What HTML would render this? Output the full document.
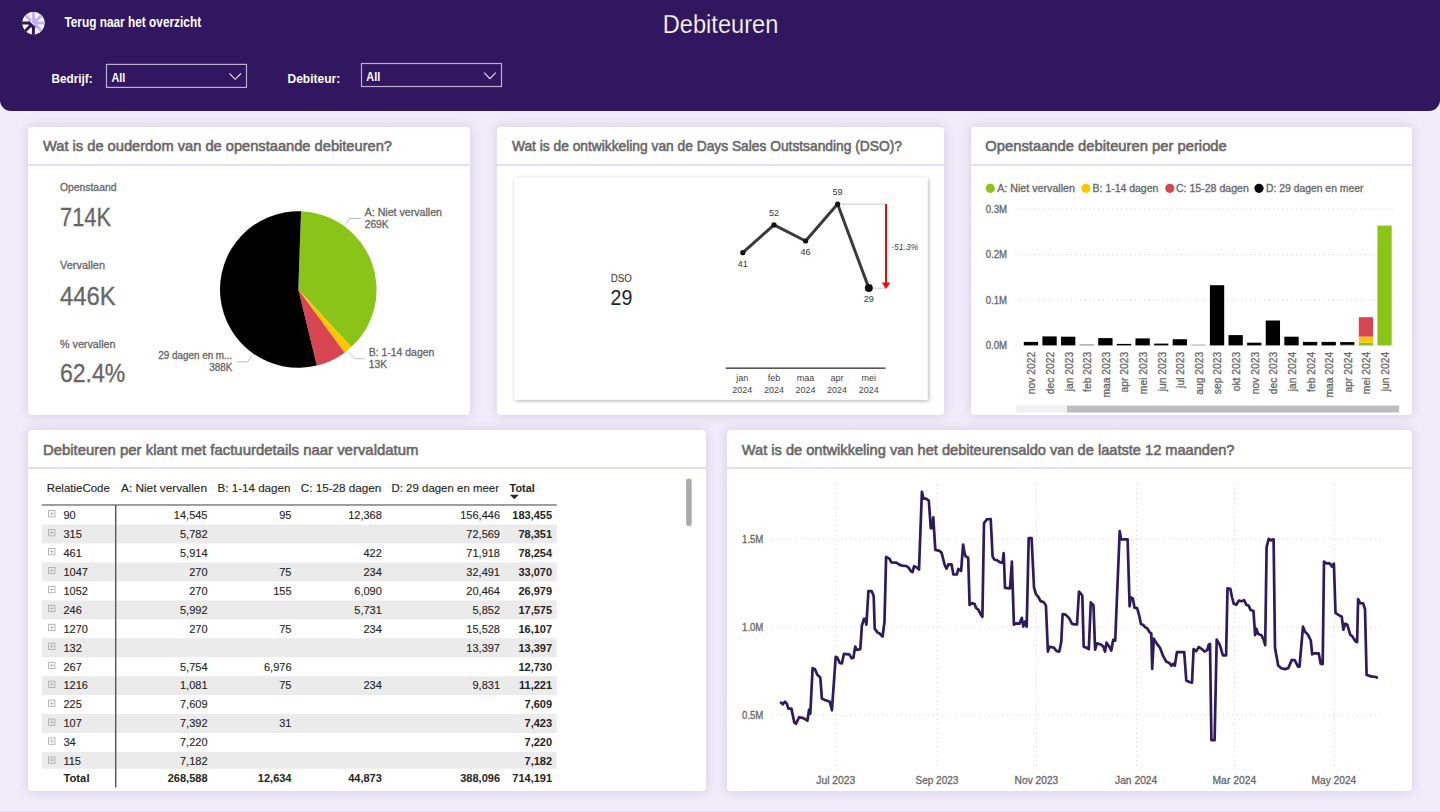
<!DOCTYPE html>
<html><head><meta charset="utf-8">
<style>
*{margin:0;padding:0;box-sizing:border-box}
html,body{width:1440px;height:812px;overflow:hidden;background:#F0ECF9;font-family:"Liberation Sans",sans-serif}
#hdr{position:absolute;left:0;top:0;width:1440px;height:111px;background:#311660;border-radius:0 0 11px 11px}
.p{position:absolute;background:#fff;border-radius:4px;box-shadow:0 0 11px rgba(60,40,120,0.17)}
svg{position:absolute;left:0;top:0}
</style></head><body>
<div id="hdr"></div>
<div style="position:absolute;left:0;top:811px;width:1440px;height:1px;background:#E2E0E7"></div>
<div class="p" style="left:28px;top:126.5px;width:441.5px;height:288px"></div>
<div class="p" style="left:496.6px;top:126.5px;width:447.4px;height:288px"></div>
<div class="p" style="left:970.7px;top:126.5px;width:441.6px;height:288px"></div>
<div class="p" style="left:28px;top:430px;width:678px;height:360.5px"></div>
<div class="p" style="left:726.6px;top:430px;width:685.7px;height:360.5px"></div>
<svg width="1440" height="812" viewBox="0 0 1440 812" font-family="Liberation Sans">
<!-- header -->
<clipPath id="icl"><circle cx="33.45" cy="23.1" r="11.4"/></clipPath>
<g clip-path="url(#icl)">
<circle cx="33.45" cy="23.1" r="11.4" fill="#fff"/>
<g stroke="#C3ADF7" stroke-width="3" stroke-linecap="butt">
<line x1="33.6" y1="11.7" x2="33.6" y2="23.1"/>
<line x1="41.6" y1="15.1" x2="33.6" y2="23.1"/>
<line x1="44.9" y1="23" x2="33.6" y2="23"/>
<line x1="41.6" y1="31.1" x2="34.6" y2="24.1"/>
<line x1="25.4" y1="15.1" x2="31" y2="20.7"/>
<line x1="35.6" y1="20" x2="35.6" y2="27"/>
</g>
<g stroke="#311660" stroke-width="3" stroke-linecap="butt">
<line x1="22" y1="23" x2="29.3" y2="23"/>
<line x1="28.2" y1="22" x2="34.6" y2="28.4"/>
<line x1="33.4" y1="35" x2="33.4" y2="27"/>
<line x1="25.2" y1="31" x2="31.2" y2="25"/>
</g>
</g>

<text x="662.8" y="33.3" font-size="26" fill="#fff" stroke="#311660" stroke-width="0.25" textLength="115.5" lengthAdjust="spacingAndGlyphs">Debiteuren</text>
<text x="64.4" y="26.75" font-size="13" font-weight="bold" fill="#fff" textLength="136.7" lengthAdjust="spacingAndGlyphs" transform="translate(64.4 26.75) scale(1 1.12) translate(-64.4 -26.75)">Terug naar het overzicht</text>
<text x="51.5" y="83.3" font-size="13.5" font-weight="bold" fill="#fff" textLength="41.2" lengthAdjust="spacingAndGlyphs">Bedrijf:</text>
<rect x="106.5" y="64.4" width="140" height="23" fill="none" stroke="#BBB0D0" stroke-width="1.2"/>
<text x="111.5" y="82.2" font-size="13" font-weight="bold" fill="#fff" textLength="13.8" lengthAdjust="spacingAndGlyphs">All</text>
<polyline points="229.5,73.5 235.2,79.3 241,73.5" fill="none" stroke="#E6E0F0" stroke-width="1.1"/>
<text x="287.5" y="83" font-size="13.5" font-weight="bold" fill="#fff" textLength="52.8" lengthAdjust="spacingAndGlyphs">Debiteur:</text>
<rect x="361.5" y="63.5" width="140" height="23" fill="none" stroke="#BBB0D0" stroke-width="1.2"/>
<text x="366.3" y="81" font-size="13" font-weight="bold" fill="#fff" textLength="14" lengthAdjust="spacingAndGlyphs">All</text>
<polyline points="484,72.7 489.9,78.6 495.8,72.7" fill="none" stroke="#E6E0F0" stroke-width="1.1"/>
<!-- panel titles -->
<g font-size="14.5" fill="#666" stroke="#666" stroke-width="0.55">
<text x="43" y="151.4" textLength="349" lengthAdjust="spacingAndGlyphs">Wat is de ouderdom van de openstaande debiteuren?</text>
<text x="511.9" y="151.4" textLength="390" lengthAdjust="spacingAndGlyphs">Wat is de ontwikkeling van de Days Sales Outstsanding (DSO)?</text>
<text x="985.3" y="151.4" textLength="241.5" lengthAdjust="spacingAndGlyphs">Openstaande debiteuren per periode</text>
<text x="42.9" y="454.8" textLength="375.5" lengthAdjust="spacingAndGlyphs">Debiteuren per klant met factuurdetails naar vervaldatum</text>
<text x="741.8" y="454.6" textLength="492.6" lengthAdjust="spacingAndGlyphs">Wat is de ontwikkeling van het debiteurensaldo van de laatste 12 maanden?</text>
</g>
<g fill="#DDD4FA">
<rect x="28" y="164.2" width="441.5" height="1.6"/>
<rect x="496.6" y="164.2" width="447.4" height="1.6"/>
<rect x="970.7" y="164.2" width="441.6" height="1.6"/>
<rect x="28" y="467.2" width="678" height="1.6"/>
<rect x="726.6" y="467.2" width="685.7" height="1.6"/>
</g>

<text x="60.00" y="190.70" font-size="11" fill="#666" stroke="#666" stroke-width="0.3" textLength="56.40" lengthAdjust="spacingAndGlyphs">Openstaand</text>
<text x="60.00" y="225.70" font-size="25" fill="#666" stroke="#666" stroke-width="0.3" textLength="51.00" lengthAdjust="spacingAndGlyphs">714K</text>
<text x="60.00" y="269.30" font-size="11" fill="#666" stroke="#666" stroke-width="0.3" textLength="45.00" lengthAdjust="spacingAndGlyphs">Vervallen</text>
<text x="60.00" y="304.50" font-size="25" fill="#666" stroke="#666" stroke-width="0.3" textLength="55.60" lengthAdjust="spacingAndGlyphs">446K</text>
<text x="60.00" y="347.60" font-size="11" fill="#666" stroke="#666" stroke-width="0.3" textLength="55.50" lengthAdjust="spacingAndGlyphs">% vervallen</text>
<text x="60.00" y="382.30" font-size="25" fill="#666" stroke="#666" stroke-width="0.3" textLength="65.30" lengthAdjust="spacingAndGlyphs">62.4%</text>
<path d="M298.3,289.5 L301.03,211.25 A78.3,78.3 0 0 1 351.31,347.12 Z" fill="#8BC419"/>
<path d="M298.3,289.5 L351.31,347.12 A78.3,78.3 0 0 1 344.59,352.65 Z" fill="#FFC600"/>
<path d="M298.3,289.5 L344.59,352.65 A78.3,78.3 0 0 1 316.75,365.60 Z" fill="#D64550"/>
<path d="M298.3,289.5 L316.75,365.60 A78.3,78.3 0 1 1 301.03,211.25 Z" fill="#000000"/>
<polyline points="345.3,224.8 349.9,218.5 360.7,218.5" fill="none" stroke="#BBBBBB" stroke-width="1"/>
<polyline points="349,352.5 355.2,358.75 364.6,358.75" fill="none" stroke="#BBBBBB" stroke-width="1"/>
<polyline points="236.5,361.9 247.5,361.9 251.5,356.3" fill="none" stroke="#BBBBBB" stroke-width="1"/>
<text x="364.70" y="215.80" font-size="10" fill="#666" stroke="#666" stroke-width="0.3" textLength="77.30" lengthAdjust="spacingAndGlyphs">A: Niet vervallen</text>
<text x="364.70" y="227.50" font-size="10" fill="#666" stroke="#666" stroke-width="0.3" textLength="24.00" lengthAdjust="spacingAndGlyphs">269K</text>
<text x="368.75" y="356.25" font-size="10" fill="#666" stroke="#666" stroke-width="0.3" textLength="65.60" lengthAdjust="spacingAndGlyphs">B: 1-14 dagen</text>
<text x="368.75" y="367.70" font-size="10" fill="#666" stroke="#666" stroke-width="0.3" textLength="18.30" lengthAdjust="spacingAndGlyphs">13K</text>
<text x="158.30" y="359.40" font-size="10" fill="#666" stroke="#666" stroke-width="0.3" textLength="74.00" lengthAdjust="spacingAndGlyphs">29 dagen en m...</text>
<text x="209.30" y="371.00" font-size="10" fill="#666" stroke="#666" stroke-width="0.3" textLength="23.00" lengthAdjust="spacingAndGlyphs">388K</text>
<filter id="cardsh" x="-5%" y="-5%" width="110%" height="110%"><feGaussianBlur in="SourceAlpha" stdDeviation="2.2"/><feOffset dx="0.6" dy="1"/><feComponentTransfer><feFuncA type="linear" slope="0.32"/></feComponentTransfer><feMerge><feMergeNode/><feMergeNode in="SourceGraphic"/></feMerge></filter>
<rect x="514.3" y="177.8" width="413.2" height="222" fill="#fff" filter="url(#cardsh)"/>
<text x="610.70" y="281.80" font-size="10.5" fill="#333" textLength="21.30" lengthAdjust="spacingAndGlyphs">DSO</text>
<text x="610.50" y="304.70" font-size="21.5" fill="#252423" textLength="21.80" lengthAdjust="spacingAndGlyphs">29</text>
<line x1="837.6" y1="204.1" x2="886.3" y2="204.1" stroke="#C8C8C8" stroke-width="1"/>
<line x1="868.8" y1="288.1" x2="886.3" y2="288.1" stroke="#C8C8C8" stroke-width="1"/>
<polyline points="742.8,252.7 774,224.9 805.6,241 837.6,204.1 868.8,288.1" fill="none" stroke="#3A3A3A" stroke-width="3" stroke-linejoin="round"/>
<circle cx="742.8" cy="252.7" r="2.6" fill="#111"/>
<circle cx="774" cy="224.9" r="2.6" fill="#111"/>
<circle cx="805.6" cy="241" r="2.6" fill="#111"/>
<circle cx="837.6" cy="204.1" r="2.6" fill="#111"/>
<circle cx="868.8" cy="288.1" r="4" fill="#111"/>
<line x1="886" y1="204" x2="886" y2="283" stroke="#FF0000" stroke-width="2"/>
<path d="M881.8,282.5 L890.2,282.5 L886,289 Z" fill="#FF0000"/>
<text x="891.30" y="249.80" font-size="9" fill="#444" font-style="italic" textLength="26.90" lengthAdjust="spacingAndGlyphs">-51.3%</text>
<text x="742.80" y="266.50" font-size="9" fill="#333" text-anchor="middle">41</text>
<text x="774.00" y="216.00" font-size="9" fill="#333" text-anchor="middle">52</text>
<text x="805.60" y="254.80" font-size="9" fill="#333" text-anchor="middle">46</text>
<text x="837.60" y="195.30" font-size="9" fill="#333" text-anchor="middle">59</text>
<text x="868.80" y="301.90" font-size="9" fill="#333" text-anchor="middle">29</text>
<rect x="725.8" y="367.4" width="159.7" height="1.6" fill="#555"/>
<text x="742.30" y="380.70" font-size="9" fill="#444" text-anchor="middle">jan</text>
<text x="742.30" y="392.60" font-size="9" fill="#444" text-anchor="middle">2024</text>
<text x="774.00" y="380.70" font-size="9" fill="#444" text-anchor="middle">feb</text>
<text x="774.00" y="392.60" font-size="9" fill="#444" text-anchor="middle">2024</text>
<text x="805.60" y="380.70" font-size="9" fill="#444" text-anchor="middle">maa</text>
<text x="805.60" y="392.60" font-size="9" fill="#444" text-anchor="middle">2024</text>
<text x="837.00" y="380.70" font-size="9" fill="#444" text-anchor="middle">apr</text>
<text x="837.00" y="392.60" font-size="9" fill="#444" text-anchor="middle">2024</text>
<text x="868.80" y="380.70" font-size="9" fill="#444" text-anchor="middle">mei</text>
<text x="868.80" y="392.60" font-size="9" fill="#444" text-anchor="middle">2024</text>
<circle cx="990.3" cy="188.3" r="4.6" fill="#8BC419"/>
<text x="997.20" y="191.50" font-size="10.2" fill="#666" stroke="#666" stroke-width="0.3" textLength="77.80" lengthAdjust="spacingAndGlyphs">A: Niet vervallen</text>
<circle cx="1085.8" cy="188.3" r="4.6" fill="#FFC600"/>
<text x="1092.60" y="191.50" font-size="10.2" fill="#666" stroke="#666" stroke-width="0.3" textLength="65.70" lengthAdjust="spacingAndGlyphs">B: 1-14 dagen</text>
<circle cx="1169.8" cy="188.3" r="4.6" fill="#D64550"/>
<text x="1175.90" y="191.50" font-size="10.2" fill="#666" stroke="#666" stroke-width="0.3" textLength="72.90" lengthAdjust="spacingAndGlyphs">C: 15-28 dagen</text>
<circle cx="1259" cy="188.3" r="4.6" fill="#000000"/>
<text x="1266.00" y="191.50" font-size="10.2" fill="#666" stroke="#666" stroke-width="0.3" textLength="97.40" lengthAdjust="spacingAndGlyphs">D: 29 dagen en meer</text>
<line x1="1015.5" y1="209.1" x2="1396" y2="209.1" stroke="#D0D0D0" stroke-width="1" stroke-dasharray="1 3.6"/>
<text x="985.70" y="212.90" font-size="10.2" fill="#666" stroke="#666" stroke-width="0.3" textLength="21.30" lengthAdjust="spacingAndGlyphs">0.3M</text>
<line x1="1015.5" y1="254.6" x2="1396" y2="254.6" stroke="#D0D0D0" stroke-width="1" stroke-dasharray="1 3.6"/>
<text x="985.70" y="258.40" font-size="10.2" fill="#666" stroke="#666" stroke-width="0.3" textLength="21.30" lengthAdjust="spacingAndGlyphs">0.2M</text>
<line x1="1015.5" y1="300.1" x2="1396" y2="300.1" stroke="#D0D0D0" stroke-width="1" stroke-dasharray="1 3.6"/>
<text x="985.70" y="303.90" font-size="10.2" fill="#666" stroke="#666" stroke-width="0.3" textLength="21.30" lengthAdjust="spacingAndGlyphs">0.1M</text>
<line x1="1015.5" y1="345.4" x2="1396" y2="345.4" stroke="#D0D0D0" stroke-width="1" stroke-dasharray="1 3.6"/>
<text x="985.70" y="349.20" font-size="10.2" fill="#666" stroke="#666" stroke-width="0.3" textLength="21.30" lengthAdjust="spacingAndGlyphs">0.0M</text>
<rect x="1023.80" y="341.90" width="14.3" height="3.5" fill="#000000"/>
<text transform="translate(1035.35,351.8) rotate(-90)" text-anchor="end" font-size="10.3" fill="#666" stroke="#666" stroke-width="0.28">nov 2022</text>
<rect x="1042.41" y="336.40" width="14.3" height="9" fill="#000000"/>
<text transform="translate(1053.96,351.8) rotate(-90)" text-anchor="end" font-size="10.3" fill="#666" stroke="#666" stroke-width="0.28">dec 2022</text>
<rect x="1061.02" y="336.70" width="14.3" height="8.7" fill="#000000"/>
<text transform="translate(1072.57,351.8) rotate(-90)" text-anchor="end" font-size="10.3" fill="#666" stroke="#666" stroke-width="0.28">jan 2023</text>
<rect x="1079.63" y="344.40" width="14.3" height="1" fill="#888"/>
<text transform="translate(1091.18,351.8) rotate(-90)" text-anchor="end" font-size="10.3" fill="#666" stroke="#666" stroke-width="0.28">feb 2023</text>
<rect x="1098.24" y="338.10" width="14.3" height="7.3" fill="#000000"/>
<text transform="translate(1109.79,351.8) rotate(-90)" text-anchor="end" font-size="10.3" fill="#666" stroke="#666" stroke-width="0.28">maa 2023</text>
<rect x="1116.85" y="343.90" width="14.3" height="1.5" fill="#000000"/>
<text transform="translate(1128.40,351.8) rotate(-90)" text-anchor="end" font-size="10.3" fill="#666" stroke="#666" stroke-width="0.28">apr 2023</text>
<rect x="1135.46" y="338.40" width="14.3" height="7" fill="#000000"/>
<text transform="translate(1147.01,351.8) rotate(-90)" text-anchor="end" font-size="10.3" fill="#666" stroke="#666" stroke-width="0.28">mei 2023</text>
<rect x="1154.07" y="343.60" width="14.3" height="1.8" fill="#000000"/>
<text transform="translate(1165.62,351.8) rotate(-90)" text-anchor="end" font-size="10.3" fill="#666" stroke="#666" stroke-width="0.28">jun 2023</text>
<rect x="1172.68" y="339.20" width="14.3" height="6.2" fill="#000000"/>
<text transform="translate(1184.23,351.8) rotate(-90)" text-anchor="end" font-size="10.3" fill="#666" stroke="#666" stroke-width="0.28">jul 2023</text>
<rect x="1191.29" y="344.60" width="14.3" height="0.8" fill="#999"/>
<text transform="translate(1202.84,351.8) rotate(-90)" text-anchor="end" font-size="10.3" fill="#666" stroke="#666" stroke-width="0.28">aug 2023</text>
<rect x="1209.90" y="285.20" width="14.3" height="60.2" fill="#000000"/>
<text transform="translate(1221.45,351.8) rotate(-90)" text-anchor="end" font-size="10.3" fill="#666" stroke="#666" stroke-width="0.28">sep 2023</text>
<rect x="1228.51" y="335.10" width="14.3" height="10.3" fill="#000000"/>
<text transform="translate(1240.06,351.8) rotate(-90)" text-anchor="end" font-size="10.3" fill="#666" stroke="#666" stroke-width="0.28">okt 2023</text>
<rect x="1247.12" y="342.70" width="14.3" height="2.7" fill="#000000"/>
<text transform="translate(1258.67,351.8) rotate(-90)" text-anchor="end" font-size="10.3" fill="#666" stroke="#666" stroke-width="0.28">nov 2023</text>
<rect x="1265.73" y="320.50" width="14.3" height="24.9" fill="#000000"/>
<text transform="translate(1277.28,351.8) rotate(-90)" text-anchor="end" font-size="10.3" fill="#666" stroke="#666" stroke-width="0.28">dec 2023</text>
<rect x="1284.34" y="336.70" width="14.3" height="8.7" fill="#000000"/>
<text transform="translate(1295.89,351.8) rotate(-90)" text-anchor="end" font-size="10.3" fill="#666" stroke="#666" stroke-width="0.28">jan 2024</text>
<rect x="1302.95" y="341.90" width="14.3" height="3.5" fill="#000000"/>
<text transform="translate(1314.50,351.8) rotate(-90)" text-anchor="end" font-size="10.3" fill="#666" stroke="#666" stroke-width="0.28">feb 2024</text>
<rect x="1321.56" y="341.90" width="14.3" height="3.5" fill="#000000"/>
<text transform="translate(1333.11,351.8) rotate(-90)" text-anchor="end" font-size="10.3" fill="#666" stroke="#666" stroke-width="0.28">maa 2024</text>
<rect x="1340.17" y="344.80" width="14.3" height="0.6" fill="#D64550"/>
<rect x="1340.17" y="342.10" width="14.3" height="2.7" fill="#000000"/>
<text transform="translate(1351.72,351.8) rotate(-90)" text-anchor="end" font-size="10.3" fill="#666" stroke="#666" stroke-width="0.28">apr 2024</text>
<rect x="1358.78" y="342.60" width="14.3" height="2.8" fill="#8BC419"/>
<rect x="1358.78" y="336.60" width="14.3" height="6" fill="#FFC600"/>
<rect x="1358.78" y="317.20" width="14.3" height="19.4" fill="#D64550"/>
<text transform="translate(1370.33,351.8) rotate(-90)" text-anchor="end" font-size="10.3" fill="#666" stroke="#666" stroke-width="0.28">mei 2024</text>
<rect x="1377.39" y="225.60" width="14.3" height="119.8" fill="#8BC419"/>
<text transform="translate(1388.94,351.8) rotate(-90)" text-anchor="end" font-size="10.3" fill="#666" stroke="#666" stroke-width="0.28">jun 2024</text>
<rect x="1016.2" y="405.5" width="50.9" height="7" fill="#F0F0F0"/>
<rect x="1067.1" y="405.5" width="332.1" height="7" fill="#BDBDBD"/>
<text x="46.70" y="491.60" font-size="11.3" fill="#252423" stroke="#252423" stroke-width="0.12" textLength="63.10" lengthAdjust="spacingAndGlyphs">RelatieCode</text>
<text x="121.00" y="491.60" font-size="11.3" fill="#252423" stroke="#252423" stroke-width="0.12" textLength="86.00" lengthAdjust="spacingAndGlyphs">A: Niet vervallen</text>
<text x="217.50" y="491.60" font-size="11.3" fill="#252423" stroke="#252423" stroke-width="0.12" textLength="72.90" lengthAdjust="spacingAndGlyphs">B: 1-14 dagen</text>
<text x="300.70" y="491.60" font-size="11.3" fill="#252423" stroke="#252423" stroke-width="0.12" textLength="80.70" lengthAdjust="spacingAndGlyphs">C: 15-28 dagen</text>
<text x="391.50" y="491.60" font-size="11.3" fill="#252423" stroke="#252423" stroke-width="0.12" textLength="107.50" lengthAdjust="spacingAndGlyphs">D: 29 dagen en meer</text>
<text x="509.60" y="491.60" font-size="11.3" fill="#252423" font-weight="bold" textLength="25.20" lengthAdjust="spacingAndGlyphs">Total</text>
<path d="M509.9,494.7 L518.8,494.7 L514.35,499.2 Z" fill="#252423"/>
<rect x="42" y="524.55" width="514.8" height="18.95" fill="#EBEBEB"/>
<rect x="42" y="562.45" width="514.8" height="18.95" fill="#EBEBEB"/>
<rect x="42" y="600.35" width="514.8" height="18.95" fill="#EBEBEB"/>
<rect x="42" y="638.25" width="514.8" height="18.95" fill="#EBEBEB"/>
<rect x="42" y="676.15" width="514.8" height="18.95" fill="#EBEBEB"/>
<rect x="42" y="714.05" width="514.8" height="18.95" fill="#EBEBEB"/>
<rect x="42" y="751.95" width="514.8" height="16.80" fill="#EBEBEB"/>
<rect x="48.6" y="510.60" width="6.3" height="6.3" fill="none" stroke="#ADADAD" stroke-width="0.9"/>
<path d="M49.9,513.75 H53.6 M51.75,511.90 V515.60" stroke="#ADADAD" stroke-width="0.8"/>
<text x="63.40" y="518.90" font-size="11" fill="#252423" stroke="#252423" stroke-width="0.12">90</text>
<text x="207.50" y="518.90" font-size="11" fill="#252423" stroke="#252423" stroke-width="0.12" text-anchor="end">14,545</text>
<text x="291.50" y="518.90" font-size="11" fill="#252423" stroke="#252423" stroke-width="0.12" text-anchor="end">95</text>
<text x="381.80" y="518.90" font-size="11" fill="#252423" stroke="#252423" stroke-width="0.12" text-anchor="end">12,368</text>
<text x="500.00" y="518.90" font-size="11" fill="#252423" stroke="#252423" stroke-width="0.12" text-anchor="end">156,446</text>
<text x="552.10" y="518.90" font-size="11" fill="#252423" font-weight="bold" text-anchor="end">183,455</text>
<rect x="48.6" y="529.55" width="6.3" height="6.3" fill="none" stroke="#ADADAD" stroke-width="0.9"/>
<path d="M49.9,532.70 H53.6 M51.75,530.85 V534.55" stroke="#ADADAD" stroke-width="0.8"/>
<text x="63.40" y="537.85" font-size="11" fill="#252423" stroke="#252423" stroke-width="0.12">315</text>
<text x="207.50" y="537.85" font-size="11" fill="#252423" stroke="#252423" stroke-width="0.12" text-anchor="end">5,782</text>
<text x="500.00" y="537.85" font-size="11" fill="#252423" stroke="#252423" stroke-width="0.12" text-anchor="end">72,569</text>
<text x="552.10" y="537.85" font-size="11" fill="#252423" font-weight="bold" text-anchor="end">78,351</text>
<rect x="48.6" y="548.50" width="6.3" height="6.3" fill="none" stroke="#ADADAD" stroke-width="0.9"/>
<path d="M49.9,551.65 H53.6 M51.75,549.80 V553.50" stroke="#ADADAD" stroke-width="0.8"/>
<text x="63.40" y="556.80" font-size="11" fill="#252423" stroke="#252423" stroke-width="0.12">461</text>
<text x="207.50" y="556.80" font-size="11" fill="#252423" stroke="#252423" stroke-width="0.12" text-anchor="end">5,914</text>
<text x="381.80" y="556.80" font-size="11" fill="#252423" stroke="#252423" stroke-width="0.12" text-anchor="end">422</text>
<text x="500.00" y="556.80" font-size="11" fill="#252423" stroke="#252423" stroke-width="0.12" text-anchor="end">71,918</text>
<text x="552.10" y="556.80" font-size="11" fill="#252423" font-weight="bold" text-anchor="end">78,254</text>
<rect x="48.6" y="567.45" width="6.3" height="6.3" fill="none" stroke="#ADADAD" stroke-width="0.9"/>
<path d="M49.9,570.60 H53.6 M51.75,568.75 V572.45" stroke="#ADADAD" stroke-width="0.8"/>
<text x="63.40" y="575.75" font-size="11" fill="#252423" stroke="#252423" stroke-width="0.12">1047</text>
<text x="207.50" y="575.75" font-size="11" fill="#252423" stroke="#252423" stroke-width="0.12" text-anchor="end">270</text>
<text x="291.50" y="575.75" font-size="11" fill="#252423" stroke="#252423" stroke-width="0.12" text-anchor="end">75</text>
<text x="381.80" y="575.75" font-size="11" fill="#252423" stroke="#252423" stroke-width="0.12" text-anchor="end">234</text>
<text x="500.00" y="575.75" font-size="11" fill="#252423" stroke="#252423" stroke-width="0.12" text-anchor="end">32,491</text>
<text x="552.10" y="575.75" font-size="11" fill="#252423" font-weight="bold" text-anchor="end">33,070</text>
<rect x="48.6" y="586.40" width="6.3" height="6.3" fill="none" stroke="#ADADAD" stroke-width="0.9"/>
<path d="M49.9,589.55 H53.6 M51.75,587.70 V591.40" stroke="#ADADAD" stroke-width="0.8"/>
<text x="63.40" y="594.70" font-size="11" fill="#252423" stroke="#252423" stroke-width="0.12">1052</text>
<text x="207.50" y="594.70" font-size="11" fill="#252423" stroke="#252423" stroke-width="0.12" text-anchor="end">270</text>
<text x="291.50" y="594.70" font-size="11" fill="#252423" stroke="#252423" stroke-width="0.12" text-anchor="end">155</text>
<text x="381.80" y="594.70" font-size="11" fill="#252423" stroke="#252423" stroke-width="0.12" text-anchor="end">6,090</text>
<text x="500.00" y="594.70" font-size="11" fill="#252423" stroke="#252423" stroke-width="0.12" text-anchor="end">20,464</text>
<text x="552.10" y="594.70" font-size="11" fill="#252423" font-weight="bold" text-anchor="end">26,979</text>
<rect x="48.6" y="605.35" width="6.3" height="6.3" fill="none" stroke="#ADADAD" stroke-width="0.9"/>
<path d="M49.9,608.50 H53.6 M51.75,606.65 V610.35" stroke="#ADADAD" stroke-width="0.8"/>
<text x="63.40" y="613.65" font-size="11" fill="#252423" stroke="#252423" stroke-width="0.12">246</text>
<text x="207.50" y="613.65" font-size="11" fill="#252423" stroke="#252423" stroke-width="0.12" text-anchor="end">5,992</text>
<text x="381.80" y="613.65" font-size="11" fill="#252423" stroke="#252423" stroke-width="0.12" text-anchor="end">5,731</text>
<text x="500.00" y="613.65" font-size="11" fill="#252423" stroke="#252423" stroke-width="0.12" text-anchor="end">5,852</text>
<text x="552.10" y="613.65" font-size="11" fill="#252423" font-weight="bold" text-anchor="end">17,575</text>
<rect x="48.6" y="624.30" width="6.3" height="6.3" fill="none" stroke="#ADADAD" stroke-width="0.9"/>
<path d="M49.9,627.45 H53.6 M51.75,625.60 V629.30" stroke="#ADADAD" stroke-width="0.8"/>
<text x="63.40" y="632.60" font-size="11" fill="#252423" stroke="#252423" stroke-width="0.12">1270</text>
<text x="207.50" y="632.60" font-size="11" fill="#252423" stroke="#252423" stroke-width="0.12" text-anchor="end">270</text>
<text x="291.50" y="632.60" font-size="11" fill="#252423" stroke="#252423" stroke-width="0.12" text-anchor="end">75</text>
<text x="381.80" y="632.60" font-size="11" fill="#252423" stroke="#252423" stroke-width="0.12" text-anchor="end">234</text>
<text x="500.00" y="632.60" font-size="11" fill="#252423" stroke="#252423" stroke-width="0.12" text-anchor="end">15,528</text>
<text x="552.10" y="632.60" font-size="11" fill="#252423" font-weight="bold" text-anchor="end">16,107</text>
<rect x="48.6" y="643.25" width="6.3" height="6.3" fill="none" stroke="#ADADAD" stroke-width="0.9"/>
<path d="M49.9,646.40 H53.6 M51.75,644.55 V648.25" stroke="#ADADAD" stroke-width="0.8"/>
<text x="63.40" y="651.55" font-size="11" fill="#252423" stroke="#252423" stroke-width="0.12">132</text>
<text x="500.00" y="651.55" font-size="11" fill="#252423" stroke="#252423" stroke-width="0.12" text-anchor="end">13,397</text>
<text x="552.10" y="651.55" font-size="11" fill="#252423" font-weight="bold" text-anchor="end">13,397</text>
<rect x="48.6" y="662.20" width="6.3" height="6.3" fill="none" stroke="#ADADAD" stroke-width="0.9"/>
<path d="M49.9,665.35 H53.6 M51.75,663.50 V667.20" stroke="#ADADAD" stroke-width="0.8"/>
<text x="63.40" y="670.50" font-size="11" fill="#252423" stroke="#252423" stroke-width="0.12">267</text>
<text x="207.50" y="670.50" font-size="11" fill="#252423" stroke="#252423" stroke-width="0.12" text-anchor="end">5,754</text>
<text x="291.50" y="670.50" font-size="11" fill="#252423" stroke="#252423" stroke-width="0.12" text-anchor="end">6,976</text>
<text x="552.10" y="670.50" font-size="11" fill="#252423" font-weight="bold" text-anchor="end">12,730</text>
<rect x="48.6" y="681.15" width="6.3" height="6.3" fill="none" stroke="#ADADAD" stroke-width="0.9"/>
<path d="M49.9,684.30 H53.6 M51.75,682.45 V686.15" stroke="#ADADAD" stroke-width="0.8"/>
<text x="63.40" y="689.45" font-size="11" fill="#252423" stroke="#252423" stroke-width="0.12">1216</text>
<text x="207.50" y="689.45" font-size="11" fill="#252423" stroke="#252423" stroke-width="0.12" text-anchor="end">1,081</text>
<text x="291.50" y="689.45" font-size="11" fill="#252423" stroke="#252423" stroke-width="0.12" text-anchor="end">75</text>
<text x="381.80" y="689.45" font-size="11" fill="#252423" stroke="#252423" stroke-width="0.12" text-anchor="end">234</text>
<text x="500.00" y="689.45" font-size="11" fill="#252423" stroke="#252423" stroke-width="0.12" text-anchor="end">9,831</text>
<text x="552.10" y="689.45" font-size="11" fill="#252423" font-weight="bold" text-anchor="end">11,221</text>
<rect x="48.6" y="700.10" width="6.3" height="6.3" fill="none" stroke="#ADADAD" stroke-width="0.9"/>
<path d="M49.9,703.25 H53.6 M51.75,701.40 V705.10" stroke="#ADADAD" stroke-width="0.8"/>
<text x="63.40" y="708.40" font-size="11" fill="#252423" stroke="#252423" stroke-width="0.12">225</text>
<text x="207.50" y="708.40" font-size="11" fill="#252423" stroke="#252423" stroke-width="0.12" text-anchor="end">7,609</text>
<text x="552.10" y="708.40" font-size="11" fill="#252423" font-weight="bold" text-anchor="end">7,609</text>
<rect x="48.6" y="719.05" width="6.3" height="6.3" fill="none" stroke="#ADADAD" stroke-width="0.9"/>
<path d="M49.9,722.20 H53.6 M51.75,720.35 V724.05" stroke="#ADADAD" stroke-width="0.8"/>
<text x="63.40" y="727.35" font-size="11" fill="#252423" stroke="#252423" stroke-width="0.12">107</text>
<text x="207.50" y="727.35" font-size="11" fill="#252423" stroke="#252423" stroke-width="0.12" text-anchor="end">7,392</text>
<text x="291.50" y="727.35" font-size="11" fill="#252423" stroke="#252423" stroke-width="0.12" text-anchor="end">31</text>
<text x="552.10" y="727.35" font-size="11" fill="#252423" font-weight="bold" text-anchor="end">7,423</text>
<rect x="48.6" y="738.00" width="6.3" height="6.3" fill="none" stroke="#ADADAD" stroke-width="0.9"/>
<path d="M49.9,741.15 H53.6 M51.75,739.30 V743.00" stroke="#ADADAD" stroke-width="0.8"/>
<text x="63.40" y="746.30" font-size="11" fill="#252423" stroke="#252423" stroke-width="0.12">34</text>
<text x="207.50" y="746.30" font-size="11" fill="#252423" stroke="#252423" stroke-width="0.12" text-anchor="end">7,220</text>
<text x="552.10" y="746.30" font-size="11" fill="#252423" font-weight="bold" text-anchor="end">7,220</text>
<rect x="48.6" y="756.95" width="6.3" height="6.3" fill="none" stroke="#ADADAD" stroke-width="0.9"/>
<path d="M49.9,760.10 H53.6 M51.75,758.25 V761.95" stroke="#ADADAD" stroke-width="0.8"/>
<text x="63.40" y="765.25" font-size="11" fill="#252423" stroke="#252423" stroke-width="0.12">115</text>
<text x="207.50" y="765.25" font-size="11" fill="#252423" stroke="#252423" stroke-width="0.12" text-anchor="end">7,182</text>
<text x="552.10" y="765.25" font-size="11" fill="#252423" font-weight="bold" text-anchor="end">7,182</text>
<text x="63.40" y="782.30" font-size="11.3" fill="#252423" font-weight="bold">Total</text>
<text x="207.50" y="782.30" font-size="11" fill="#252423" font-weight="bold" text-anchor="end">268,588</text>
<text x="291.50" y="782.30" font-size="11" fill="#252423" font-weight="bold" text-anchor="end">12,634</text>
<text x="381.80" y="782.30" font-size="11" fill="#252423" font-weight="bold" text-anchor="end">44,873</text>
<text x="500.00" y="782.30" font-size="11" fill="#252423" font-weight="bold" text-anchor="end">388,096</text>
<text x="552.10" y="782.30" font-size="11" fill="#252423" font-weight="bold" text-anchor="end">714,191</text>
<rect x="42" y="504" width="514.8" height="1.9" fill="#9A9A9A"/>
<rect x="115" y="505" width="1.4" height="282.5" fill="#555"/>
<rect x="686.1" y="478.5" width="5.6" height="47.5" rx="2.8" fill="#ABABAB"/>
<line x1="772" y1="539.1" x2="1382" y2="539.1" stroke="#D4D4D4" stroke-width="1" stroke-dasharray="1 3.6"/>
<line x1="772" y1="627.2" x2="1382" y2="627.2" stroke="#D4D4D4" stroke-width="1" stroke-dasharray="1 3.6"/>
<line x1="772" y1="715.2" x2="1382" y2="715.2" stroke="#D4D4D4" stroke-width="1" stroke-dasharray="1 3.6"/>
<line x1="836" y1="484" x2="836" y2="769.5" stroke="#D4D4D4" stroke-width="1" stroke-dasharray="1 3.6"/>
<line x1="937.2" y1="484" x2="937.2" y2="769.5" stroke="#D4D4D4" stroke-width="1" stroke-dasharray="1 3.6"/>
<line x1="1036.5" y1="484" x2="1036.5" y2="769.5" stroke="#D4D4D4" stroke-width="1" stroke-dasharray="1 3.6"/>
<line x1="1136.5" y1="484" x2="1136.5" y2="769.5" stroke="#D4D4D4" stroke-width="1" stroke-dasharray="1 3.6"/>
<line x1="1234.6" y1="484" x2="1234.6" y2="769.5" stroke="#D4D4D4" stroke-width="1" stroke-dasharray="1 3.6"/>
<line x1="1334.5" y1="484" x2="1334.5" y2="769.5" stroke="#D4D4D4" stroke-width="1" stroke-dasharray="1 3.6"/>
<text x="742.10" y="542.90" font-size="10.5" fill="#666" stroke="#666" stroke-width="0.3" textLength="21.20" lengthAdjust="spacingAndGlyphs">1.5M</text>
<text x="742.10" y="631.00" font-size="10.5" fill="#666" stroke="#666" stroke-width="0.3" textLength="21.20" lengthAdjust="spacingAndGlyphs">1.0M</text>
<text x="742.10" y="718.90" font-size="10.5" fill="#666" stroke="#666" stroke-width="0.3" textLength="21.20" lengthAdjust="spacingAndGlyphs">0.5M</text>
<text x="816.25" y="784.00" font-size="10.8" fill="#666" stroke="#666" stroke-width="0.3" textLength="38.95" lengthAdjust="spacingAndGlyphs">Jul 2023</text>
<text x="915.60" y="784.00" font-size="10.8" fill="#666" stroke="#666" stroke-width="0.3" textLength="42.70" lengthAdjust="spacingAndGlyphs">Sep 2023</text>
<text x="1014.60" y="784.00" font-size="10.8" fill="#666" stroke="#666" stroke-width="0.3" textLength="43.70" lengthAdjust="spacingAndGlyphs">Nov 2023</text>
<text x="1115.00" y="784.00" font-size="10.8" fill="#666" stroke="#666" stroke-width="0.3" textLength="42.30" lengthAdjust="spacingAndGlyphs">Jan 2024</text>
<text x="1212.50" y="784.00" font-size="10.8" fill="#666" stroke="#666" stroke-width="0.3" textLength="43.75" lengthAdjust="spacingAndGlyphs">Mar 2024</text>
<text x="1311.50" y="784.00" font-size="10.8" fill="#666" stroke="#666" stroke-width="0.3" textLength="44.75" lengthAdjust="spacingAndGlyphs">May 2024</text>
<polyline points="781,702.6 782.8,704.3 785,701.7 786.7,703.4 788.4,708.6 791.4,708.6 794.3,722.4 796,723.8 799.1,717.2 803.4,718.1 807.4,720.7 809.1,709.5 810.3,713.8 812.6,668.1 815,669.3 817.2,674.5 820.3,677.6 821.9,698.6 825,700 829.8,701.7 831.9,710.3 835.7,656.9 837.4,657.8 839.7,662.9 841.9,663.4 844,653.8 849.1,654.3 851.7,658.3 853.4,657.8 855.2,646.6 856.9,650 860.3,649.1 861.9,625.7 863.9,618.8 865.2,618.8 866.4,624.7 868.4,591.2 871.7,591.2 873.7,596.1 874.7,628.6 877.6,632.6 879.6,633.5 882.6,636.5 884.5,621.7 886.1,556.8 889.4,558.7 891.4,562.3 896.3,562.7 899.3,564.6 902.2,565.6 906.2,566 908.5,567.6 911.1,571.5 912.5,572.1 914.1,566.2 917,567.6 919,569.6 921.9,491.8 923.5,498.7 925.9,498.7 928.8,500.7 930.8,528.2 932.2,528.2 933.3,517.4 935.3,549.9 939.6,550.9 941.6,552.8 944.6,564.6 946.5,568.6 948.5,564.3 951.5,564.3 953.4,574.5 956.8,574.5 958.4,569 961.1,570.9 963.1,544.6 964.7,553.8 965.7,556.4 968.2,557.8 969.6,605 972.2,603 974.5,604 976.1,608 978.5,609.9 980.4,613.9 982.4,616.8 984,523.3 986.7,519.4 990.7,519 992.6,556.8 994.6,559.7 997.2,560.3 1000.1,562.3 1002.5,562.7 1003.7,553.2 1005,587.9 1010,588.3 1011.9,561.7 1013.9,624.7 1015.9,623.3 1019.4,623.7 1021.8,617.8 1023.3,626.6 1025.3,621.3 1026.7,626.6 1028.7,538.1 1031.6,538.1 1034,587.3 1035.9,594.2 1038.5,597.1 1040.5,601.1 1043.4,602 1045.9,605.3 1047.9,651.6 1049.4,646.7 1053.8,647.6 1056.7,651.2 1059.3,651.6 1061.3,641.7 1062.6,614.2 1065.6,614.6 1069.1,618.1 1071.9,623.6 1074.4,624.4 1077,624.4 1079,591.5 1082.3,595.5 1083.7,646.7 1086.3,647.6 1088.8,649.2 1090.8,602.4 1093.5,605.3 1095.1,649.6 1097.1,643.3 1101.4,644.7 1103.4,646.7 1105,651.6 1106.5,642.7 1109.3,646.7 1111.3,650.6 1113.2,639.8 1115.2,640.7 1119.7,531.1 1121.1,539.4 1127.6,539.4 1129.6,606.3 1130.9,597.4 1132.9,598.4 1134.5,607.9 1136.9,607.9 1137.5,609.3 1139.2,615.6 1140.9,624 1143.4,625 1145,627.1 1147.1,628.2 1149.7,632.3 1151.3,633.4 1152.2,669 1153.8,638.6 1157,643.9 1160.1,648 1163.3,656.4 1166.4,661.7 1168.9,662.7 1171.6,665.8 1173.1,663.8 1174.8,665.8 1176.9,652.2 1180,652.2 1184.2,652.2 1186.3,680.5 1189.4,682 1192,682.6 1193.6,649.1 1196.1,651.2 1198.9,647 1202,649.1 1204.5,651.6 1207.2,650.1 1208.7,644.9 1210,643.9 1211.4,740.2 1214.6,740.2 1216.7,639.7 1219.8,644.9 1222.9,655.4 1226.1,655.4 1227.5,588.4 1230.3,588.8 1232.1,597.5 1233.8,603.8 1236.3,604.8 1238.8,600.6 1241.5,601.2 1244.2,600.2 1246.3,604.8 1248.8,605.8 1250.5,610 1253.5,611.1 1255.1,635.2 1256.2,628.5 1258.3,634.1 1261.4,635.2 1263.5,639.3 1265.2,645.2 1266.6,547.2 1268.7,538.8 1270.8,540.3 1273.6,539.3 1275,647.7 1278.2,665.5 1281.3,668.2 1284.9,669.1 1288.2,668.2 1291.8,659.9 1294.9,660.3 1298,666.6 1299.5,666.6 1303,626.7 1304.9,631.6 1307.9,634.6 1310.8,640.5 1312.2,654.3 1314.8,653.3 1318.7,653.3 1320.7,663.7 1322.7,664.1 1324,561.7 1326.6,563.3 1329.6,563.3 1331.9,566.6 1333.9,563.6 1335.5,612.9 1338.4,614.9 1341.8,616.8 1343.3,629.7 1345.3,623.7 1347.3,624.7 1350.2,634.6 1352.2,636.2 1355.6,641.5 1357.1,642.1 1358.1,599.1 1360.1,603.1 1363.1,603.4 1365,609 1366.6,675 1369,675.6 1370.9,676.4 1375.9,677 1376.8,677.5" fill="none" stroke="#2F1A5E" stroke-width="2.7" stroke-linejoin="round" stroke-linecap="round"/>
</svg>
</body></html>
